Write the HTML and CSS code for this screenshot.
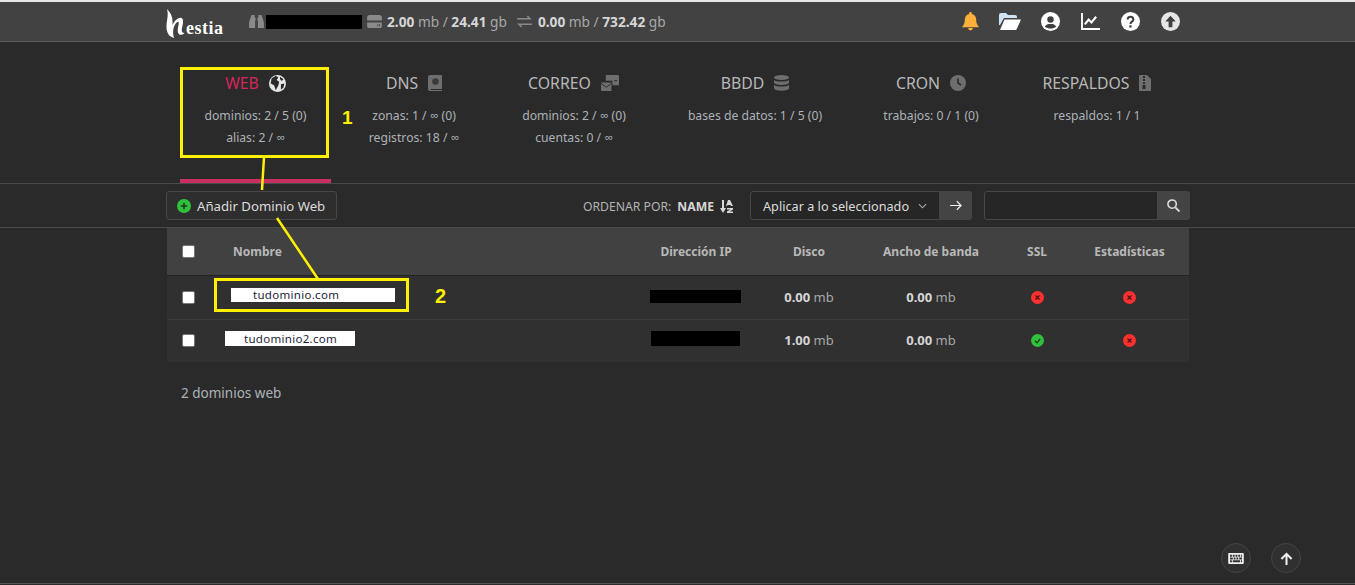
FILE: index.html
```html
<!DOCTYPE html>
<html lang="es">
<head>
<meta charset="utf-8">
<title>Hestia</title>
<link rel="stylesheet" href="styles.css">
</head>
<body>
<header class="topbar">
  <div class="wrap topbar-in">
    <div class="logo">
      <svg class="logo-h" viewBox="0 0 21 29" width="21" height="29"><path fill="#fff" d="M1 0c3 3 5.500 7 5.500 12v4c2.500-5 6-8 9-7 2.500 1 1.500 6 .5 10-.7 3 0 5 2.500 5-1.500 2-5.500 3-6.500-.5-1-3.500 1.500-9 .5-10.500-1.200-1-4 2.500-5 6.500-.7 3-.5 6 .5 9.500-4-1-7-4-7.500-10C.2 12 3 7 1 0z"/></svg>
      <span class="logo-t">estia</span>
    </div>
    <div class="stats">
      <svg class="ic-bin" viewBox="0 0 16 14" width="15" height="13"><path fill="#8a8a8a" d="M2.500 0h3.500v3h1v3H6.500v8H0V8zM10 0h3.500L16 8v6H9.500V6H9V3h1z"/></svg>
      <span class="redact user"></span>
      <svg class="ic-hdd" viewBox="0 0 16 14" width="15" height="13"><path fill="#8a8a8a" d="M2 0h12l2 2v4H0V2zM0 8h16v4l-1 2H1l-1-2zm11 2v2h1v-2zm2 0v2h1v-2z" fill-rule="evenodd"/></svg>
      <span class="stat"><b>2.00</b> mb / <b>24.41</b> gb</span>
      <svg class="ic-ex" viewBox="0 0 16 14" width="15" height="13"><path fill="none" stroke="#8a8a8a" stroke-width="1.600" d="M0 4h14M11 1l3 3-3 0M16 10H2M5 13l-3-3 3 0"/></svg>
      <span class="stat"><b>0.00</b> mb / <b>732.42</b> gb</span>
    </div>
    <nav class="top-icons">
      <svg viewBox="0 0 18 20" width="17" height="19"><path fill="#ffb03a" d="M9 0a1.500 1.500 0 0 1 1.500 1.500v.6C13.500 2.800 15 5.400 15 8c0 4 1 5.500 3 8H0c2-2.500 3-4 3-8 0-2.600 1.500-5.200 4.500-5.900v-.6A1.500 1.500 0 0 1 9 0zM6.500 17h5a2.500 2.500 0 0 1-5 0z"/></svg>
      <svg viewBox="0 0 22 18" width="22" height="18"><path fill="#cfe4f5" d="M0 2a2 2 0 0 1 2-2h5l2 2h7a2 2 0 0 1 2 2v1H5L1 12H0z"/><path fill="#fff" d="M5.500 6.500H22l-4 9a2 2 0 0 1-2 1.500H1z"/></svg>
      <svg viewBox="0 0 20 20" width="19" height="19"><circle cx="10" cy="10" r="10" fill="#fff"/><circle cx="10" cy="8" r="3.400" fill="#3f3f3f"/><path fill="#3f3f3f" d="M4 15.500c1-2.500 3-3 6-3s5 .5 6 3c-3.500 2.500-8.500 2.500-12 0z"/></svg>
      <svg viewBox="0 0 20 18" width="19" height="17"><path fill="none" stroke="#fff" stroke-width="2" d="M1 0v17h19"/><path fill="none" stroke="#fff" stroke-width="2.200" d="M4 12l4-5 3 3 5-6"/></svg>
      <svg viewBox="0 0 20 20" width="19" height="19"><circle cx="10" cy="10" r="10" fill="#fff"/><path fill="none" stroke="#3f3f3f" stroke-width="2.200" d="M7 8c0-4 6-4 6 0 0 2.500-3 2-3 4.500"/><rect x="8.800" y="14" width="2.400" height="2.400" fill="#3f3f3f"/></svg>
      <svg viewBox="0 0 20 20" width="19" height="19"><circle cx="10" cy="10" r="10" fill="#e6e6e6"/><path fill="#3f3f3f" d="M10 4l5.500 6H12v6H8v-6H4.500z"/></svg>
    </nav>
  </div>
</header>

<section class="wrap tabs">
  <div class="tab active">
    <h3>WEB <svg class="tab-ic" viewBox="0 0 20 20" width="17" height="17"><circle cx="10" cy="10" r="10" fill="#e6e6e6"/><path fill="#2a2a2a" d="M3 4l5-3 3 2-2 3 3 2-1 4-3 6-2-6-4-2zM13 2l4 3-2 2-2-2zM14 11l4-1-1 5-3 2z"/></svg></h3>
    <p>dominios: 2 / 5 (0)</p><p>alias: 2 / ∞</p>
  </div>
  <div class="tab">
    <h3>DNS <svg class="tab-ic" viewBox="0 0 15 17" width="14" height="16"><path fill="#6e6e6e" d="M2 0h12a1 1 0 0 1 1 1v14H3a1 1 0 0 0 0 1h12v1H2a2 2 0 0 1-2-2V2a2 2 0 0 1 2-2z"/><circle cx="8" cy="7" r="3.500" fill="#3a3a3a"/></svg></h3>
    <p>zonas: 1 / ∞ (0)</p><p>registros: 18 / ∞</p>
  </div>
  <div class="tab">
    <h3>CORREO <svg class="tab-ic" viewBox="0 0 20 17" width="19" height="16"><path fill="#6e6e6e" d="M5 0h13a1 1 0 0 1 1 1v10h-7V6H5z"/><path fill="#6e6e6e" d="M0 8h11v9H0z"/><path fill="none" stroke="#2a2a2a" d="M0 9l5.500 4L11 9M14 6h3"/></svg></h3>
    <p>dominios: 2 / ∞ (0)</p><p>cuentas: 0 / ∞</p>
  </div>
  <div class="tab">
    <h3>BBDD <svg class="tab-ic" viewBox="0 0 15 16" width="15" height="16"><ellipse cx="7.500" cy="2.500" rx="7.500" ry="2.500" fill="#6e6e6e"/><path fill="#6e6e6e" d="M0 5c2 2 13 2 15 0v3c-2 2.500-13 2.500-15 0zM0 10c2 2 13 2 15 0v3.500c-2 3-13 3-15 0z"/></svg></h3>
    <p>bases de datos: 1 / 5 (0)</p>
  </div>
  <div class="tab">
    <h3>CRON <svg class="tab-ic" viewBox="0 0 16 16" width="16" height="16"><circle cx="8" cy="8" r="8" fill="#6e6e6e"/><path fill="none" stroke="#2a2a2a" stroke-width="1.600" d="M8 3.500V8l3 2"/></svg></h3>
    <p>trabajos: 0 / 1 (0)</p>
  </div>
  <div class="tab">
    <h3>RESPALDOS <svg class="tab-ic" viewBox="0 0 12 16" width="12" height="16"><path fill="#6e6e6e" d="M1 0h7l4 4v12H0V1a1 1 0 0 1 1-1z"/><path fill="#2a2a2a" d="M4 1h2v2H4zM4 4h2v2H4zM4 7h2v2H4zM3.500 10h3v4h-3z"/></svg></h3>
    <p>respaldos: 1 / 1</p>
  </div>
</section>

<section class="toolbar">
  <div class="wrap toolbar-in">
    <a class="add-btn">
      <svg viewBox="0 0 14 14" width="14" height="14"><circle cx="7" cy="7" r="7" fill="#2fc13b"/><path stroke="#1d3a1f" stroke-width="1.600" d="M7 3.800v6.400M3.800 7h6.400"/></svg>
      Añadir Dominio Web
    </a>
    <div class="tools">
      <span class="sort">ORDENAR POR: <b>NAME</b>
        <svg viewBox="0 0 14 13" width="14" height="13"><path fill="#d8d8d8" d="M2 0h2v8h2L3 13 0 8h2zM8 0h2l3 6h-2l-.5-1h-3L7 6H6zM7 8h6v1.500L9.500 11.500H13V13H7v-1.500L10.500 9.500H7z"/></svg>
      </span>
      <div class="group select-group">
        <span class="select">Aplicar a lo seleccionado
          <svg viewBox="0 0 10 6" width="9" height="6"><path fill="none" stroke="#aaa" stroke-width="1.200" d="M1 1l4 4 4-4"/></svg>
        </span>
        <span class="gbtn"><svg viewBox="0 0 14 12" width="12" height="11"><path fill="none" stroke="#eee" stroke-width="1.400" d="M0 6h13M8 1l5 5-5 5"/></svg></span>
      </div>
      <div class="group search-group">
        <span class="search"></span>
        <span class="gbtn"><svg viewBox="0 0 14 14" width="13" height="13"><circle cx="5.500" cy="5.500" r="4.500" fill="none" stroke="#ddd" stroke-width="1.700"/><path stroke="#ddd" stroke-width="2" d="M9 9l4.500 4.500"/></svg></span>
      </div>
    </div>
  </div>
</section>

<section class="wrap table">
  <div class="row head">
    <span class="cell"><span class="check"></span></span>
    <span class="cell name-h">Nombre</span>
    <span class="cell">Dirección IP</span>
    <span class="cell">Disco</span>
    <span class="cell">Ancho de banda</span>
    <span class="cell">SSL</span>
    <span class="cell stats-c">Estadísticas</span>
  </div>
  <div class="row r1">
    <span class="cell"><span class="check"></span></span>
    <span class="cell name"><span class="domain d1">tudominio.com</span></span>
    <span class="cell"><span class="redact ip1"></span></span>
    <span class="cell"><span class="val"><b>0.00</b> mb</span></span>
    <span class="cell"><span class="val"><b>0.00</b> mb</span></span>
    <span class="cell"><svg viewBox="0 0 13 13" width="13" height="13"><circle cx="6.500" cy="6.500" r="6.500" fill="#ff3030"/><path stroke="#4a1515" stroke-width="1.300" d="M4.500 4.500l4 4M8.500 4.500l-4 4"/></svg></span>
    <span class="cell stats-c"><svg viewBox="0 0 13 13" width="13" height="13"><circle cx="6.500" cy="6.500" r="6.500" fill="#ff3030"/><path stroke="#4a1515" stroke-width="1.300" d="M4.500 4.500l4 4M8.500 4.500l-4 4"/></svg></span>
  </div>
  <div class="row r2">
    <span class="cell"><span class="check"></span></span>
    <span class="cell name"><span class="domain d2">tudominio2.com</span></span>
    <span class="cell"><span class="redact ip2"></span></span>
    <span class="cell"><span class="val"><b>1.00</b> mb</span></span>
    <span class="cell"><span class="val"><b>0.00</b> mb</span></span>
    <span class="cell"><svg viewBox="0 0 13 13" width="13" height="13"><circle cx="6.500" cy="6.500" r="6.500" fill="#2fc13b"/><path fill="none" stroke="#1d3a1f" stroke-width="1.300" d="M4 6.800l2 2 3.200-4"/></svg></span>
    <span class="cell stats-c"><svg viewBox="0 0 13 13" width="13" height="13"><circle cx="6.500" cy="6.500" r="6.500" fill="#ff3030"/><path stroke="#4a1515" stroke-width="1.300" d="M4.500 4.500l4 4M8.500 4.500l-4 4"/></svg></span>
  </div>
</section>
<p class="wrap total">2 dominios web</p>

<div class="fab kb"><svg viewBox="0 0 17 12" width="16" height="11"><path fill="#eee" fill-rule="evenodd" d="M1 0h15a1 1 0 0 1 1 1v10a1 1 0 0 1-1 1H1a1 1 0 0 1-1-1V1a1 1 0 0 1 1-1zm1 2v2h2V2zm3 0v2h2V2zm3 0v2h2V2zm3 0v2h2V2zm3 0v2h1V2zM2 5v2h3V5zm4 0v2h2V5zm3 0v2h2V5zm3 0v2h3V5zM2 8v2h2V8zm3 0v2h8V8zm9 0v2h1V8z"/></svg></div>
<div class="fab up"><svg viewBox="0 0 14 14" width="13" height="13"><path fill="none" stroke="#eee" stroke-width="2.200" d="M7 14V2M1.500 7.500L7 2l5.500 5.500"/></svg></div>

<div class="mark m1"></div>
<div class="mark m2"></div>
<span class="num n1">1</span>
<span class="num n2">2</span>
<svg class="lines" viewBox="0 0 1355 585" width="1355" height="585"><path fill="none" stroke="#ffef00" stroke-width="2.500" d="M264 157l-2 33M277 218l41 61"/></svg>
<div class="footline"></div>
</body>
</html>
```

FILE: styles.css
```css
* { box-sizing: border-box; }
html, body { margin: 0; height: 585px; overflow: hidden; }
body {
  background: #2a2a2a;
  color: #b4b4b4;
  font-family: "Noto Sans", "Open Sans", sans-serif;
  font-size: 13px;
  position: relative;
  padding-top: 2px;
}
body::before { content: ""; position: absolute; left: 0; right: 0; top: 0; height: 2px; background: #e8e8e8; }
.wrap { margin-left: 167px; width: 1022px; }

/* top bar */
.topbar { height: 40px; background: #424242; border-bottom: 1px solid #5c5c5c; }
.topbar-in { display: flex; align-items: center; height: 39px; }
.logo { width: 83px; margin-left: -1px; display: flex; align-items: flex-end; color: #fff; height: 32px; }
.logo-h { flex: none; }
.logo-t { font-family: "Liberation Serif", serif; font-weight: 700; font-size: 18px; line-height: 20px; margin-left: -1px; letter-spacing: .5px; }
.stats { display: flex; align-items: center; color: #a8a8a8; font-size: 13.7px; }
.stats svg { flex: none; }
.stat b { color: #d6d6d6; font-weight: 700; }
.redact { display: block; background: #000; }
.user { width: 96px; height: 14px; margin: 0 5px 0 2px; }
.ic-hdd { margin-right: 5px; }
.ic-ex { margin: 0 6px 0 10px; }
.top-icons { margin-left: auto; width: 240px; margin-right: -1px; display: grid; grid-template-columns: repeat(6, 40px); justify-items: center; align-items: center; }

/* tabs */
.tabs { display: grid; grid-template-columns: 13px 151px 166px 154px 208px 144px 188px; height: 141px; padding-top: 29px; }
.tab { text-align: center; position: relative; font-size: 12.2px; }
.tab:first-child { grid-column: 2; }
.tab h3 { margin: 0 0 10px; font-weight: 400; font-size: 15.8px; line-height: 24px; color: #b8b8b8; display: flex; justify-content: center; align-items: center; gap: 10px; }
.tab p { margin: 0; line-height: 22px; color: #adb3b8; }
.tab-ic { flex: none; }
.active h3 { color: #d4265a; }
.active::after { content: ""; position: absolute; left: 0; right: 0; top: 108px; height: 4px; background: #c9305f; }

/* toolbar */
.toolbar { height: 45px; border-top: 1px solid #4a4a4a; border-bottom: 1px solid #4a4a4a; }
.toolbar-in { display: flex; align-items: center; justify-content: space-between; height: 43px; width: 1024px; margin-left: 166px; }
.add-btn { display: flex; align-items: center; gap: 6px; height: 29px; padding: 0 10px; width: 171px; background: #2e2e2e; border: 1px solid #474747; border-radius: 3px; color: #dcdcdc; font-size: 13.2px; white-space: nowrap; }
.tools { display: flex; align-items: center; }
.sort { font-size: 12.2px; color: #b4b4b4; margin-right: 16px; padding-top: 1px; display: flex; align-items: center; gap: 6px; }
.sort b { color: #d6d6d6; }
.group { display: flex; height: 29px; border-radius: 3px; overflow: hidden; }
.select-group { width: 222px; margin-right: 12px; }
.search-group { width: 206px; }
.select { flex: 1; border: 1px solid #474747; border-right: 0; border-radius: 3px 0 0 3px; background: #262626; color: #dcdcdc; font-size: 12.7px; padding: 0 12px; display: flex; align-items: center; justify-content: space-between; white-space: nowrap; }
.search { flex: 1; border: 1px solid #474747; border-right: 0; border-radius: 3px 0 0 3px; background: #262626; }
.gbtn { width: 33px; background: #444; display: flex; align-items: center; justify-content: center; flex: none; }

/* table */
.row { display: grid; grid-template-columns: 42px 417px 140px 86px 158px 54px 125px; align-items: center; background: #303030; border-bottom: 1px solid #3c3c3c; height: 44px; }
.cell { display: flex; justify-content: center; align-items: center; }
.stats-c { padding-left: 6px; }
.head { height: 48px; background: #414141; border-bottom: 1px solid #222; color: #b8b8b8; font-weight: 700; font-size: 12px; }
.name-h { justify-content: flex-start; padding-left: 24px; }
.r2 { height: 42px; border-bottom: 0; padding-bottom: 2px; }
.check { display: block; width: 13px; height: 13px; background: #fff; border: 1px solid #777; border-radius: 2px; }
.name { justify-content: flex-start; }
.domain { display: block; background: #fff; color: #1d1d3a; font-size: 11.5px; letter-spacing: .3px; white-space: nowrap; }
.d1 { margin-left: 22px; width: 164px; height: 14px; line-height: 14px; padding-left: 22px; margin-top: -5px; }
.d2 { margin-left: 16px; width: 130px; height: 15px; line-height: 15px; padding-left: 19px; margin-top: -4px; }
.ip1 { width: 91px; height: 13px; margin: -2px 0 0 -2px; }
.ip2 { width: 89px; height: 15px; margin: -4px 0 0 -2px; }
.val { color: #a8a8a8; font-size: 13px; }
.r1 .val { margin-top: -2px; }
.val b { color: #d6d6d6; }
.total { margin: 0 0 0 167px; padding: 22px 0 0 14px; font-size: 13.5px; color: #adb3b8; }

/* floating buttons */
.fab { position: absolute; top: 543px; width: 30px; height: 30px; border-radius: 50%; background: #303030; border: 1px solid #444; display: flex; align-items: center; justify-content: center; }
.kb { left: 1221px; }
.up { left: 1271px; }
.footline { position: absolute; left: 0; right: 0; top: 583px; height: 1px; background: #555; }

/* annotations */
.mark { position: absolute; border: 3px solid #ffef00; }
.m1 { left: 180px; top: 67px; width: 149px; height: 91px; }
.m2 { left: 214px; top: 278px; width: 195px; height: 34px; }
.num { position: absolute; color: #ffef00; font-family: "Liberation Sans", sans-serif; font-weight: 700; line-height: 20px; }
.n1 { left: 342px; top: 108px; font-size: 19px; }
.n2 { left: 435px; top: 286px; font-size: 20px; }
.lines { position: absolute; left: 0; top: 0; pointer-events: none; }
```
